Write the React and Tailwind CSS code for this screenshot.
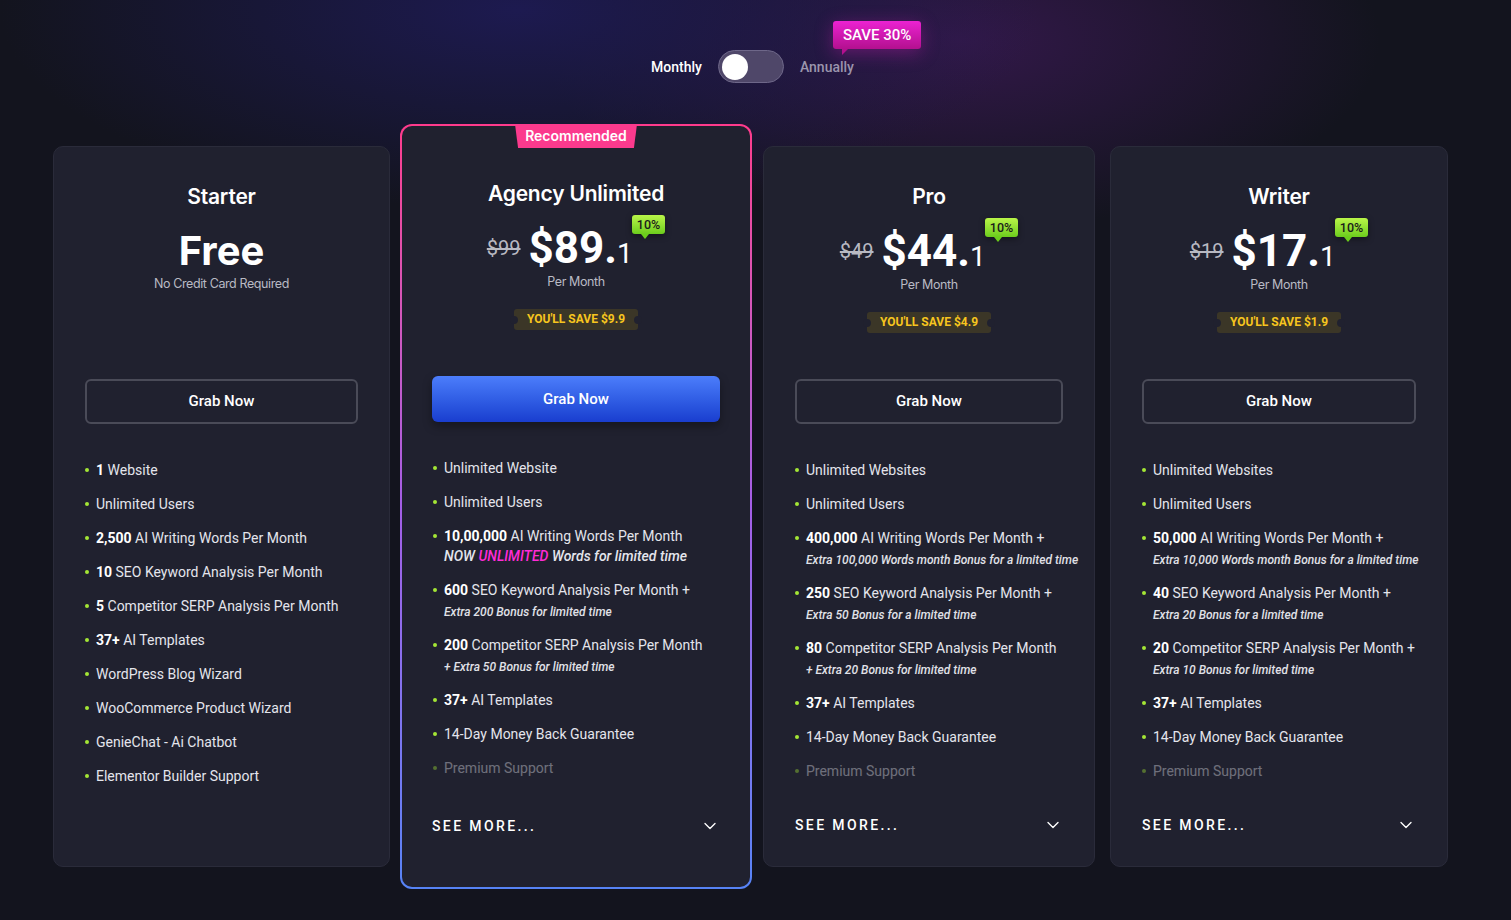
import React from "react";
import { ChevronDown } from "lucide-react";

const sans = "font-['Roboto',sans-serif]";
const head = "font-['Inter',sans-serif]";

const plans = [
  {
    name: "Starter",
    free: true,
    width: "w-[337px]",
    features: [
      { b: "1", t: " Website" },
      { t: "Unlimited Users" },
      { b: "2,500", t: " AI Writing Words Per Month" },
      { b: "10", t: " SEO Keyword Analysis Per Month" },
      { b: "5", t: " Competitor SERP Analysis Per Month" },
      { b: "37+", t: " AI Templates" },
      { t: "WordPress Blog Wizard" },
      { t: "WooCommerce Product Wizard" },
      { t: "GenieChat - Ai Chatbot" },
      { t: "Elementor Builder Support" },
    ],
  },
  {
    name: "Agency Unlimited",
    featured: true,
    old: "$99",
    price: "$89",
    save: "$9.9",
    width: "w-[352px]",
    features: [
      { t: "Unlimited Website" },
      { t: "Unlimited Users" },
      {
        b: "10,00,000",
        t: " AI Writing Words Per Month",
        big: (
          <>
            NOW <span className="text-[#ff2bd6]">UNLIMITED</span> Words for limited time
          </>
        ),
      },
      { b: "600", t: " SEO Keyword Analysis Per Month +", sub: "Extra 200 Bonus for limited time" },
      { b: "200", t: " Competitor SERP Analysis Per Month", sub: "+ Extra 50 Bonus for limited time" },
      { b: "37+", t: " AI Templates" },
      { t: "14-Day Money Back Guarantee" },
      { t: "Premium Support", faded: true },
    ],
  },
  {
    name: "Pro",
    old: "$49",
    price: "$44",
    save: "$4.9",
    width: "w-[332px]",
    features: [
      { t: "Unlimited Websites" },
      { t: "Unlimited Users" },
      { b: "400,000", t: " AI Writing Words Per Month +", sub: "Extra 100,000 Words month Bonus for a limited time" },
      { b: "250", t: " SEO Keyword Analysis Per Month +", sub: "Extra 50 Bonus for a limited time" },
      { b: "80", t: " Competitor SERP Analysis Per Month", sub: "+ Extra 20 Bonus for limited time" },
      { b: "37+", t: " AI Templates" },
      { t: "14-Day Money Back Guarantee" },
      { t: "Premium Support", faded: true },
    ],
  },
  {
    name: "Writer",
    old: "$19",
    price: "$17",
    save: "$1.9",
    width: "w-[338px]",
    features: [
      { t: "Unlimited Websites" },
      { t: "Unlimited Users" },
      { b: "50,000", t: " AI Writing Words Per Month +", sub: "Extra 10,000 Words month Bonus for a limited time" },
      { b: "40", t: " SEO Keyword Analysis Per Month +", sub: "Extra 20 Bonus for a limited time" },
      { b: "20", t: " Competitor SERP Analysis Per Month +", sub: "Extra 10 Bonus for limited time" },
      { b: "37+", t: " AI Templates" },
      { t: "14-Day Money Back Guarantee" },
      { t: "Premium Support", faded: true },
    ],
  },
];

const Feature = ({ f }) => (
  <li className={`flex gap-[7px] ${f.faded ? "opacity-40" : ""}`}>
    <span className="mt-[8px] h-[4px] w-[4px] shrink-0 rounded-full bg-[#a3e635]" />
    <div>
      <p className="text-[14px] leading-5 text-[#e4e5ec]">
        {f.b && <span className="font-bold text-white">{f.b}</span>}
        {f.t}
      </p>
      {f.big && (
        <p className="text-[14px] leading-5 italic font-medium text-[#e4e5ec] whitespace-nowrap">{f.big}</p>
      )}
      {f.sub && (
        <p className="mt-[3px] text-[12px] leading-[18px] italic font-medium text-[#e0e1e8] whitespace-nowrap">
          {f.sub}
        </p>
      )}
    </div>
  </li>
);

const PriceHeader = ({ plan }) => (
  <div className="flex h-[196px] flex-col items-center">
    <h3 className={`${head} text-[21px] leading-7 font-semibold text-white tracking-[-0.2px]`}>{plan.name}</h3>
    {plan.free ? (
      <>
        <p className={`${head} mt-[20px] text-[40px] leading-none font-bold text-white`}>Free</p>
        <p className={`${head} mt-[4px] text-[12.5px] leading-[18px] text-[#b9bac4] tracking-[-0.4px]`}>
          No Credit Card Required
        </p>
      </>
    ) : (
      <>
        <div className="mt-[18px] flex items-center">
          <span className="mr-[8px] text-[20px] leading-none text-[#b8b9c2] line-through">{plan.old}</span>
          <span className="text-[44px] leading-none font-bold text-white">
            {plan.price}.<span className="text-[28px] font-normal">1</span>
          </span>
          <span className="relative ml-[-1px] -mt-[11px] self-start rounded-[3px] bg-gradient-to-b from-[#b9f548] to-[#6ccd1c] px-[5px] text-[12.5px] leading-[19px] font-medium text-[#1b1b1b] shadow-[0_2px_6px_rgba(0,0,0,0.4)]">
            10%
            <span className="absolute left-[9px] top-full h-0 w-0 border-l-[4px] border-r-[4px] border-t-[5px] border-l-transparent border-r-transparent border-t-[#6ccd1c]" />
          </span>
        </div>
        <p className={`${head} mt-[3px] text-[12.5px] leading-[18px] text-[#b9bac4] tracking-[-0.4px]`}>Per Month</p>
        <div className="relative mt-[18px] rounded-[3px] bg-[#3b3627] px-[13px] text-[12px] leading-[21px] font-bold text-[#f7c51e]">
          YOU'LL SAVE {plan.save}
          <span className="absolute left-[-4px] top-1/2 h-[8px] w-[8px] -translate-y-1/2 rounded-full bg-[#20212f]" />
          <span className="absolute right-[-4px] top-1/2 h-[8px] w-[8px] -translate-y-1/2 rounded-full bg-[#20212f]" />
        </div>
      </>
    )}
  </div>
);

const SeeMore = () => (
  <div className="mt-auto flex items-center justify-between">
    <span className="text-[14px] leading-5 font-medium tracking-[0.17em] text-white">SEE MORE...</span>
    <ChevronDown className="h-[20px] w-[20px] text-white" strokeWidth={1.6} />
  </div>
);

const PlanCard = ({ plan }) => {
  const body = (
    <>
      <PriceHeader plan={plan} />
      {plan.featured ? (
        <button className="h-[46px] w-full rounded-md bg-gradient-to-b from-[#4c7dfb] to-[#1a3dcf] text-[15px] font-medium text-white shadow-[0_4px_10px_rgba(0,0,0,0.35)]">
          Grab Now
        </button>
      ) : (
        <button className="h-[45px] w-full rounded-md border-2 border-[#4a4b58] text-[15px] font-medium text-white">
          Grab Now
        </button>
      )}
      <ul className={`${plan.featured ? "ml-[1px]" : ""} -mr-[24px] mt-9 flex flex-col gap-[14px]`}>
        {plan.features.map((f, i) => (
          <Feature key={i} f={f} />
        ))}
      </ul>
      {!plan.free && <SeeMore />}
    </>
  );

  if (plan.featured) {
    return (
      <div className={`relative ${plan.width} h-[765px] shrink-0 rounded-[12px] bg-gradient-to-b from-[#ff3a8c] via-[#a35ee6] to-[#5683f6] p-[2px]`}>
        <div className={`${sans} flex h-full flex-col rounded-[10px] bg-[#20212f] px-[30px] pt-[54px] pb-[51px]`}>
          {body}
        </div>
        <div
          className={`${head} absolute left-1/2 top-0 h-[24px] w-[122px] -translate-x-1/2 bg-[#fb3a8d] text-center text-[14px] leading-[24px] font-semibold text-white [clip-path:polygon(0_0,100%_0,97.5%_100%,2.5%_100%)]`}
        >
          Recommended
        </div>
      </div>
    );
  }

  return (
    <div className={`${sans} ${plan.width} flex h-[721px] shrink-0 flex-col rounded-[10px] border border-[#2a2b3a] bg-[#20212f] px-[31px] pt-[36px] pb-[31px]`}>
      {body}
    </div>
  );
};

export default function App() {
  return (
    <div
      className={`${sans} min-h-screen w-full overflow-hidden bg-[#13141e] bg-[radial-gradient(ellipse_520px_200px_at_520px_10px,#1d1a50,transparent),radial-gradient(ellipse_420px_190px_at_960px_40px,#321849,transparent)] pt-[50px]`}
    >
      <div className="flex items-center justify-center gap-[16px] pr-[6px]">
        <span className="text-[14px] leading-5 font-medium text-white">Monthly</span>
        <div className="flex h-[33px] w-[66px] items-center rounded-full border border-[#6e6789] bg-[#4f4769] px-[3px]">
          <span className="h-[26px] w-[26px] rounded-full bg-white" />
        </div>
        <div className="relative">
          <span className="text-[14px] leading-5 font-medium text-[#9b96ad]">Annually</span>
          <div className="absolute left-[33px] top-[-34px] whitespace-nowrap rounded-[3px] bg-gradient-to-b from-[#ec22d2] to-[#b3108f] px-[10px] text-[15px] leading-[28px] font-medium text-white shadow-[0_4px_18px_rgba(220,30,190,0.35)]">
            SAVE 30%
            <span className="absolute left-[9px] top-full h-0 w-0 border-r-[6px] border-t-[6px] border-r-transparent border-t-[#b3108f]" />
          </div>
        </div>
      </div>

      <div className="mt-[41px] flex items-center pl-[53px] pb-[31px]">
        <PlanCard plan={plans[0]} />
        <div className="ml-[10px]">
          <PlanCard plan={plans[1]} />
        </div>
        <div className="ml-[11px]">
          <PlanCard plan={plans[2]} />
        </div>
        <div className="ml-[15px]">
          <PlanCard plan={plans[3]} />
        </div>
      </div>
    </div>
  );
}
